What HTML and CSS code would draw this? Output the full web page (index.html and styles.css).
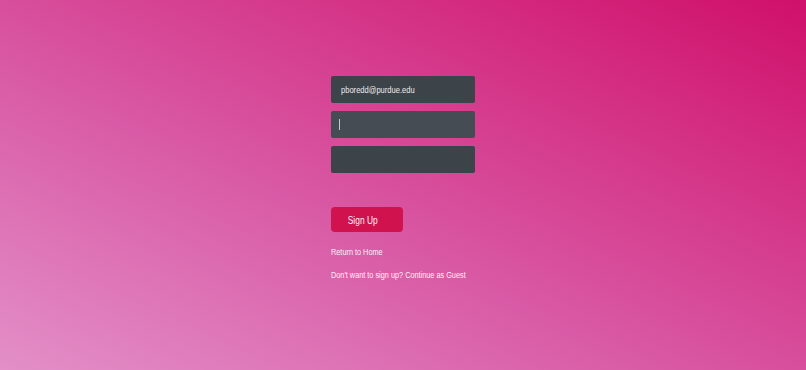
FILE: index.html
```html
<!DOCTYPE html>
<html>
<head>
<meta charset="utf-8">
<link rel="stylesheet" href="styles.css">
</head>
<body>
<div class="page">
  <div class="form">
    <div class="field"><span class="txt">pboredd@purdue.edu</span></div>
    <div class="field focus"><span class="caret"></span></div>
    <div class="field"></div>
    <button class="btn"><span class="txt">Sign Up</span></button>
    <a class="link first"><span class="txt">Return to Home</span></a>
    <a class="link second"><span class="txt">Don't want to sign up? Continue as Guest</span></a>
  </div>
</div>
</body>
</html>
```
FILE: styles.css
```css
html, body {
  margin: 0;
  padding: 0;
  height: 100%;
}
body {
  font-family: "Liberation Sans", Arial, sans-serif;
}
.page {
  height: 370px;
  background: linear-gradient(to top right, #e38fc8 0%, #d95ba6 40%, #d0106a 100%);
  box-sizing: border-box;
  padding-top: 76px;
  padding-left: 331px;
}
.form {
  display: flex;
  flex-direction: column;
  align-items: flex-start;
  width: 144px;
}
.txt {
  display: inline-block;
  white-space: nowrap;
  transform-origin: left center;
}
.field {
  width: 144px;
  height: 27px;
  background: #3c4349;
  border-radius: 2px;
  margin-bottom: 8px;
  box-sizing: border-box;
  padding-left: 10px;
  color: #ececec;
  font-size: 9px;
  display: flex;
  align-items: center;
}
.field .txt {
  transform: scaleX(0.84);
}
.field.focus {
  background: #454c53;
  padding-left: 8px;
}
.caret {
  display: block;
  width: 1px;
  height: 11px;
  background: #c8c8c8;
}
.btn {
  margin-top: 26px;
  width: 72px;
  height: 25px;
  background: #d0134e;
  border: none;
  border-radius: 4px;
  color: #fdf0f4;
  font-family: "Liberation Sans", Arial, sans-serif;
  font-size: 10.5px;
  padding: 0 8px 0 0;
}
.btn .txt {
  transform-origin: center center;
  transform: scaleX(0.8);
}
.link {
  color: #fdf0f7;
  font-size: 8.5px;
  line-height: 10px;
  display: block;
}
.link .txt {
  transform: scaleX(0.86);
}
.link.first {
  margin-top: 15px;
}
.link.second {
  margin-top: 13px;
}
```
